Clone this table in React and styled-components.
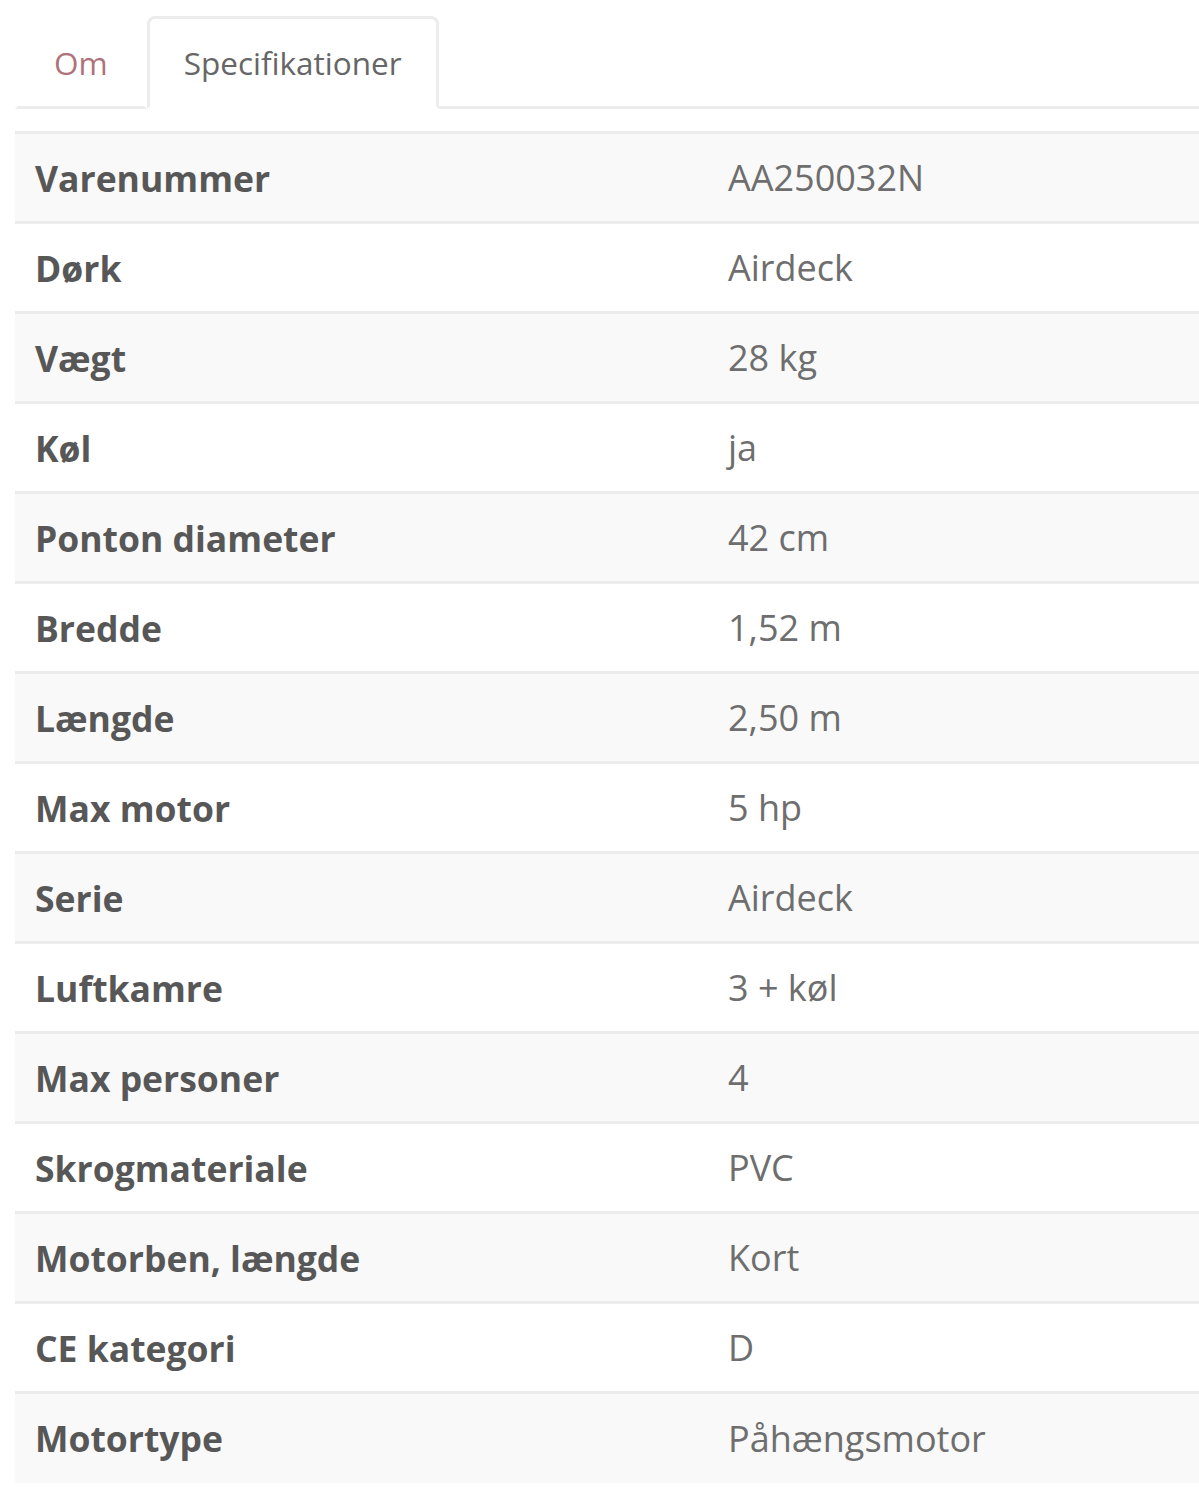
import React from "react";
import styled, { createGlobalStyle } from "styled-components";

const GlobalStyle = createGlobalStyle`
  body {
    margin: 0;
    background: #ffffff;
    font-family: "Open Sans", "Noto Sans", sans-serif;
  }
`;

const Page = styled.div`
  padding: 16px 0 0 15px;
`;

const TabNav = styled.ul`
  display: flex;
  list-style: none;
  margin: 0;
  padding: 0;
  border-bottom: 3px solid #ececec;
`;

const Tab = styled.li`
  height: 93px;
  box-sizing: border-box;
  display: flex;
  align-items: center;
  padding: 0 ${(p) => (p.active ? "34px" : "36px")};
  margin-bottom: -3px;
  font-size: 31.5px;
  color: ${(p) => (p.active ? "#666666" : "#b0727a")};
  background: #ffffff;
  border: 3px solid ${(p) => (p.active ? "#ececec" : "transparent")};
  border-bottom-color: ${(p) => (p.active ? "#ffffff" : "#ececec")};
  border-radius: 8px 8px 0 0;
  cursor: pointer;
`;

const SpecTable = styled.table`
  width: 100%;
  margin-top: 22px;
  border-collapse: collapse;
  border-top: 3px solid #ececec;
`;

const Row = styled.tr`
  background: ${(p) => (p.striped ? "#f9f9f9" : "#ffffff")};
  border-top: 3px solid #ececec;
  &:first-child {
    border-top: none;
  }
`;

const Label = styled.td`
  width: 693px;
  box-sizing: border-box;
  height: 90px;
  padding: 0 20px;
  font-size: 35.5px;
  font-weight: 700;
  color: #575757;
  vertical-align: middle;
`;

const Value = styled.td`
  padding: 0 20px;
  font-size: 36px;
  color: #6e6e6e;
  vertical-align: middle;
`;

const specs = [
  ["Varenummer", "AA250032N"],
  ["Dørk", "Airdeck"],
  ["Vægt", "28 kg"],
  ["Køl", "ja"],
  ["Ponton diameter", "42 cm"],
  ["Bredde", "1,52 m"],
  ["Længde", "2,50 m"],
  ["Max motor", "5 hp"],
  ["Serie", "Airdeck"],
  ["Luftkamre", "3 + køl"],
  ["Max personer", "4"],
  ["Skrogmateriale", "PVC"],
  ["Motorben, længde", "Kort"],
  ["CE kategori", "D"],
  ["Motortype", "Påhængsmotor"],
];

export default function App() {
  return (
    <Page>
      <GlobalStyle />
      <TabNav>
        <Tab>Om</Tab>
        <Tab active>Specifikationer</Tab>
      </TabNav>
      <SpecTable>
        <tbody>
          {specs.map(([label, value], i) => (
            <Row key={label} striped={i % 2 === 0}>
              <Label>{label}</Label>
              <Value>{value}</Value>
            </Row>
          ))}
        </tbody>
      </SpecTable>
    </Page>
  );
}
